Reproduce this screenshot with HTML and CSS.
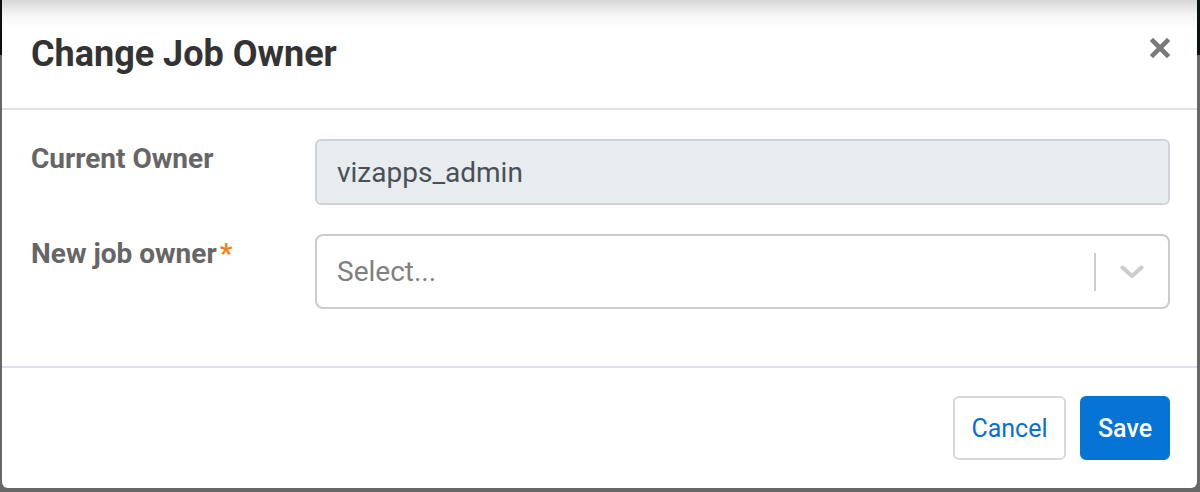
FILE: index.html
```html
<!DOCTYPE html>
<html>
<head>
<meta charset="utf-8">
<link rel="stylesheet" href="styles.css">
</head>
<body>
<div class="modal">
  <div class="modal-header">
    <h1 class="title">Change Job Owner</h1>
    <button class="close" aria-label="Close">
      <svg width="20" height="20" viewBox="0 0 20 20"><path d="M3 3 L17 17 M17 3 L3 17" stroke="#7a7a7a" stroke-width="4.6" stroke-linecap="square"/></svg>
    </button>
  </div>
  <div class="modal-body">
    <div class="row row-current">
      <label class="label">Current Owner</label>
      <div class="input readonly">vizapps_admin</div>
    </div>
    <div class="row row-new">
      <label class="label">New job owner<span class="req">*</span></label>
      <div class="select">
        <span class="placeholder">Select...</span>
        <span class="sep"></span>
        <span class="chev">
          <svg width="24" height="14" viewBox="0 0 24 14"><path d="M2.5 2.5 L12 11 L21.5 2.5" fill="none" stroke="#cccccc" stroke-width="4" stroke-linecap="round" stroke-linejoin="round"/></svg>
        </span>
      </div>
    </div>
  </div>
  <div class="modal-footer">
    <button class="btn btn-cancel">Cancel</button>
    <button class="btn btn-save">Save</button>
  </div>
</div>
</body>
</html>
```
FILE: styles.css
```css
html, body {
  margin: 0;
  padding: 0;
}
body {
  width: 1200px;
  height: 492px;
  overflow: hidden;
  background: linear-gradient(#0b1013 0, #0b1013 55px, #676767 55px, #676767 100%);
  font-family: Roboto, "Liberation Sans", sans-serif;
}
.modal {
  margin-left: 2px;
  width: 1195px;
  height: 488px;
  background: linear-gradient(#d6d6d6 0, #f4f4f4 14px, #ffffff 28px);
  border-radius: 0 0 6px 6px;
  display: flex;
  flex-direction: column;
  box-sizing: border-box;
}
.modal-header {
  height: 110px;
  flex: none;
  box-sizing: border-box;
  border-bottom: 2px solid #dee2e6;
  display: flex;
  align-items: flex-start;
  justify-content: space-between;
  padding: 33px 27px 0 29px;
}
.title {
  margin: 0;
  font-size: 36px;
  line-height: 42px;
  font-weight: 700;
  color: #333333;
}
.close {
  border: 0;
  background: none;
  padding: 0;
  width: 20px;
  height: 20px;
  margin-top: 5px;
  margin-right: 0;
}
.close svg { display: block; }
.modal-body {
  flex: none;
  padding: 29px 27px 0 29px;
  height: 258px;
  box-sizing: border-box;
  border-bottom: 2px solid #dee2e6;
  display: flex;
  flex-direction: column;
  gap: 29px;
}
.row {
  display: flex;
  align-items: flex-start;
}
.label {
  width: 284px;
  flex: none;
  font-size: 28px;
  line-height: 33px;
  font-weight: 700;
  color: #666666;
  padding-top: 3px;
}
.req {
  color: #f48120;
  margin-left: 3px;
}
.input {
  flex: 1;
  height: 66px;
  box-sizing: border-box;
  border: 2px solid #ced4da;
  border-radius: 6px;
  background: #e9ecef;
  color: #495057;
  font-size: 28px;
  display: flex;
  align-items: center;
  padding-left: 20px;
}
.select {
  flex: 1;
  height: 75px;
  box-sizing: border-box;
  border: 2px solid #cccccc;
  border-radius: 8px;
  background: #ffffff;
  display: flex;
  align-items: center;
  padding-left: 20px;
}
.placeholder {
  flex: 1;
  font-size: 28px;
  color: #808080;
}
.sep {
  width: 2px;
  height: 38px;
  background: #cccccc;
}
.chev {
  width: 72px;
  display: flex;
  justify-content: center;
  align-items: center;
}
.chev svg { display: block; }
.modal-footer {
  flex: 1;
  display: flex;
  justify-content: flex-end;
  align-items: center;
  gap: 14px;
  padding: 0 27px 0 0;
}
.btn {
  height: 64px;
  font-family: Roboto, "Liberation Sans", sans-serif;
  font-size: 25px;
  border-radius: 6px;
  padding: 0;
  box-sizing: border-box;
}
.btn-cancel {
  background: #ffffff;
  border: 2px solid #d6d8dc;
  color: #0a6ed1;
  width: 113px;
}
.btn-save {
  background: #0574d4;
  border: 2px solid #0574d4;
  color: #ffffff;
  font-weight: 500;
  width: 90px;
}
```
